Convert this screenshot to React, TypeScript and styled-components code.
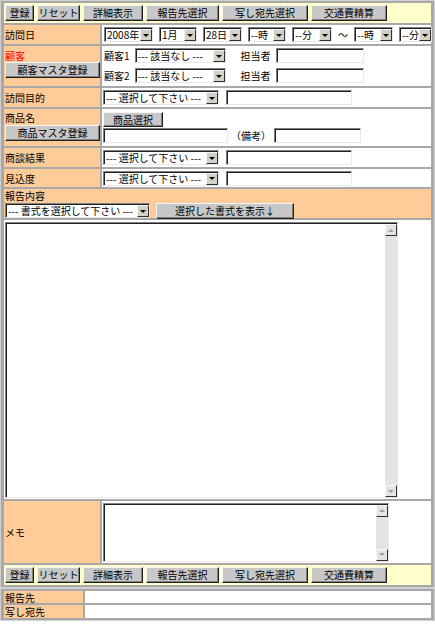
import React from "react";
import styled, { createGlobalStyle } from "styled-components";

const Global = createGlobalStyle`
  html, body { margin: 0; padding: 0; background: #ffffff; }
  body {
    font-family: "Noto Sans CJK JP", "Noto Sans", sans-serif;
    font-size: 10px;
    color: #000;
  }
  * { box-sizing: border-box; }
`;

const Page = styled.div`
  width: 435px;
  display: flex;
  flex-direction: column;
`;

const Form = styled.div<{ $cols: string; $rows: string }>`
  display: grid;
  grid-template-columns: ${(p) => p.$cols};
  grid-template-rows: ${(p) => p.$rows};
  gap: 2px;
  padding: 2px 3px;
  border: 1px solid #d0d0d0;
  background: #a8a8a8;
  width: 435px;
`;

type Kind = "label" | "value" | "bar" | "section";

const Cell = styled.div<{ $kind?: Kind; $full?: boolean; $top?: boolean; $pl?: number }>`
  grid-column: ${(p) => (p.$full ? "1 / -1" : "auto")};
  display: flex;
  flex-direction: column;
  justify-content: ${(p) => (p.$top ? "flex-start" : "center")};
  padding-left: ${(p) => p.$pl ?? 1}px;
  background: ${(p) =>
    p.$kind === "label" || p.$kind === "section"
      ? "#ffcc99"
      : p.$kind === "bar"
      ? "#ffffcc"
      : "#ffffff"};
  line-height: 13px;
  white-space: nowrap;
  min-width: 0;
`;

const RedLabel = styled.div`
  color: #ff0000;
  padding-top: 3px;
  height: 16px;
`;

const TopLabel = styled.div<{ $h: number; $pt: number }>`
  padding-top: ${(p) => p.$pt}px;
  height: ${(p) => p.$h}px;
  line-height: 12px;
`;

const Toolbar = styled.div`
  display: flex;
  gap: 3px;
`;

const Button = styled.button<{ $w: number; $h?: number }>`
  flex: none;
  width: ${(p) => p.$w}px;
  height: ${(p) => p.$h ?? 16}px;
  padding: 0;
  margin: 0;
  font-family: inherit;
  font-size: 10px;
  line-height: 12px;
  color: #000;
  background: #c8c8c8;
  border: 1px solid;
  border-color: #f4f4f4 #202020 #202020 #f4f4f4;
  box-shadow: inset -1px -1px 0 #808080;
  cursor: default;
  white-space: nowrap;
`;

const MasterButton = styled(Button)`
  display: block;
`;

const Line = styled.div<{ $gap?: number; $h?: number; $pl?: number }>`
  display: flex;
  align-items: center;
  gap: ${(p) => p.$gap ?? 6}px;
  height: ${(p) => p.$h ?? 15}px;
  padding-left: ${(p) => p.$pl ?? 0}px;
`;

const Stack = styled.div<{ $pt?: number; $gap?: number }>`
  display: flex;
  flex-direction: column;
  gap: ${(p) => p.$gap ?? 0}px;
  padding-top: ${(p) => p.$pt ?? 0}px;
`;

const SelectBox = styled.div<{ $w: number }>`
  display: inline-flex;
  align-items: stretch;
  flex: none;
  width: ${(p) => p.$w}px;
  height: 15px;
  background: #ffffff;
  border: 1px solid;
  border-color: #808080 #e8e8e8 #e8e8e8 #808080;
  box-shadow: inset 1px 1px 0 #202020;
  padding: 1px 0 0 1px;
`;

const SelectText = styled.span`
  flex: 1;
  display: flex;
  align-items: center;
  white-space: nowrap;
  padding-left: 1px;
  line-height: 12px;
`;

const SelectArrow = styled.span`
  flex: none;
  width: 12px;
  background: #d4d0c8;
  border: 1px solid;
  border-color: #f4f4f4 #303030 #303030 #f4f4f4;
  display: flex;
  align-items: center;
  justify-content: center;
  &::after {
    content: "";
    border-left: 3px solid transparent;
    border-right: 3px solid transparent;
    border-top: 3px solid #000;
  }
`;

const TextBox = styled.input<{ $w: number }>`
  flex: none;
  width: ${(p) => p.$w}px;
  height: 15px;
  margin: 0;
  padding: 0 2px;
  font-family: inherit;
  font-size: 10px;
  background: #ffffff;
  border: 1px solid;
  border-color: #808080 #e8e8e8 #e8e8e8 #808080;
  box-shadow: inset 1px 1px 0 #202020;
  outline: none;
`;

const Small = styled.span<{ $ml?: number }>`
  margin-left: ${(p) => p.$ml ?? 0}px;
`;

const AreaBox = styled.div<{ $w: number; $h: number }>`
  display: flex;
  flex: none;
  width: ${(p) => p.$w}px;
  height: ${(p) => p.$h}px;
  border: 1px solid;
  border-color: #808080 #e8e8e8 #e8e8e8 #808080;
  box-shadow: inset 1px 1px 0 #202020;
  padding: 1px 0 0 1px;
  background: #ffffff;
`;

const AreaInput = styled.textarea`
  flex: 1;
  border: none;
  resize: none;
  outline: none;
  overflow: hidden;
  font-family: inherit;
  font-size: 10px;
  background: transparent;
  padding: 0;
  margin: 0;
`;

const ScrollBar = styled.div`
  flex: none;
  width: 12px;
  display: flex;
  flex-direction: column;
  justify-content: space-between;
  background: #e4e4e4;
`;

const ScrollBtn = styled.span<{ $up?: boolean }>`
  height: 12px;
  background: #e4e4e4;
  border: 1px solid;
  border-color: #f8f8f8 #303030 #303030 #f8f8f8;
  display: flex;
  align-items: center;
  justify-content: center;
  &::after {
    content: "";
    border-left: 3px solid transparent;
    border-right: 3px solid transparent;
    ${(p) => (p.$up ? "border-bottom: 3px solid #a0a0a0;" : "border-top: 3px solid #a0a0a0;")}
  }
`;

const AreaWrap = styled.div<{ $pt?: number }>`
  padding-top: ${(p) => p.$pt ?? 0}px;
`;

const Select = ({ w, text }: { w: number; text: string }) => (
  <SelectBox $w={w}>
    <SelectText>{text}</SelectText>
    <SelectArrow />
  </SelectBox>
);

const TextArea = ({ w, h }: { w: number; h: number }) => (
  <AreaBox $w={w} $h={h}>
    <AreaInput />
    <ScrollBar>
      <ScrollBtn $up />
      <ScrollBtn />
    </ScrollBar>
  </AreaBox>
);

const toolbarButtons: [string, number][] = [
  ["登録", 29],
  ["リセット", 43],
  ["詳細表示", 60],
  ["報告先選択", 73],
  ["写し宛先選択", 86],
  ["交通費精算", 76],
];

const ToolbarCell = () => (
  <Cell $kind="bar" $full>
    <Toolbar>
      {toolbarButtons.map(([t, w]) => (
        <Button key={t} $w={w}>
          {t}
        </Button>
      ))}
    </Toolbar>
  </Cell>
);

const CHOOSE = "--- 選択して下さい ---";

const SelectWithNote = () => (
  <Line $gap={7}>
    <Select w={116} text={CHOOSE} />
    <TextBox $w={126} />
  </Line>
);

const CustomerLine = ({ n }: { n: number }) => (
  <Line $gap={5} $pl={1}>
    <span>顧客{n}</span>
    <Select w={91} text="--- 該当なし ---" />
    <Small $ml={10}>担当者</Small>
    <TextBox $w={88} />
  </Line>
);

const MAIN_ROWS = "20px 19px 40px 19px 37px 19px 18px 29px 279px 62px 20px";

export default function App() {
  return (
    <Page>
      <Global />
      <Form $cols="96px 1fr" $rows={MAIN_ROWS}>
        <ToolbarCell />

        <Cell $kind="label">訪問日</Cell>
        <Cell>
          <Line $gap={6} $pl={1}>
            <Select w={49} text="2008年" />
            <Select w={38} text="1月" />
            <Select w={39} text="28日" />
            <Select w={38} text="--時" />
            <Select w={40} text="--分" />
            <span>～</span>
            <Select w={39} text="--時" />
            <Select w={33} text="--分" />
          </Line>
        </Cell>

        <Cell $kind="label" $top>
          <RedLabel>顧客</RedLabel>
          <MasterButton $w={95}>顧客マスタ登録</MasterButton>
        </Cell>
        <Cell $top>
          <Stack $pt={2} $gap={5}>
            <CustomerLine n={1} />
            <CustomerLine n={2} />
          </Stack>
        </Cell>

        <Cell $kind="label">訪問目的</Cell>
        <Cell>
          <SelectWithNote />
        </Cell>

        <Cell $kind="label" $top>
          <TopLabel $h={16} $pt={3}>商品名</TopLabel>
          <MasterButton $w={95}>商品マスタ登録</MasterButton>
        </Cell>
        <Cell $top>
          <Stack $pt={3} $gap={1}>
            <Button $w={60} $h={15}>商品選択</Button>
            <Line $gap={3}>
              <TextBox $w={125} />
              <span>（備考）</span>
              <TextBox $w={87} />
            </Line>
          </Stack>
        </Cell>

        <Cell $kind="label">商談結果</Cell>
        <Cell>
          <SelectWithNote />
        </Cell>

        <Cell $kind="label">見込度</Cell>
        <Cell>
          <SelectWithNote />
        </Cell>

        <Cell $kind="section" $full $top>
          <TopLabel $h={14} $pt={1}>報告内容</TopLabel>
          <Line $gap={6}>
            <Select w={145} text="--- 書式を選択して下さい ---" />
            <Button $w={138}>選択した書式を表示↓</Button>
          </Line>
        </Cell>

        <Cell $full $top>
          <AreaWrap $pt={2}>
            <TextArea w={393} h={276} />
          </AreaWrap>
        </Cell>

        <Cell $kind="label">メモ</Cell>
        <Cell>
          <TextArea w={286} h={59} />
        </Cell>

        <ToolbarCell />
      </Form>
      <Form $cols="79px 1fr" $rows="12px 13px">
        <Cell $kind="label">報告先</Cell>
        <Cell />
        <Cell $kind="label">写し宛先</Cell>
        <Cell />
      </Form>
    </Page>
  );
}
